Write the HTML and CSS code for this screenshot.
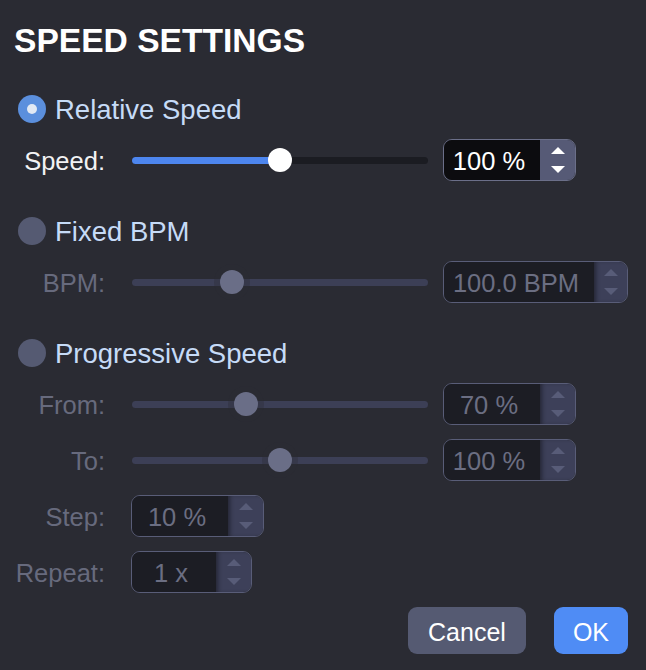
FILE: index.html
```html
<!DOCTYPE html>
<html>
<head>
<meta charset="utf-8">
<link rel="stylesheet" href="styles.css">
</head>
<body>
<div class="dialog">
  <h1 class="title">SPEED SETTINGS</h1>

  <div class="option">
    <span class="radio checked"></span>
    <span class="option-label">Relative Speed</span>
  </div>
  <div class="row">
    <span class="label">Speed:</span>
    <div class="slider" style="--v:50%">
      <div class="track"><div class="fill"></div></div>
      <div class="thumb"></div>
    </div>
    <div class="spin w133">
      <div class="field">100 %</div>
      <div class="arrows"><span class="up"></span><span class="down"></span></div>
    </div>
  </div>

  <div class="option gap-top">
    <span class="radio"></span>
    <span class="option-label">Fixed BPM</span>
  </div>
  <div class="row disabled">
    <span class="label">BPM:</span>
    <div class="slider" style="--v:33.8%">
      <div class="track"></div>
      <div class="thumb"></div>
    </div>
    <div class="spin w185">
      <div class="field">100.0 BPM</div>
      <div class="arrows"><span class="up"></span><span class="down"></span></div>
    </div>
  </div>

  <div class="option gap-top">
    <span class="radio"></span>
    <span class="option-label">Progressive Speed</span>
  </div>
  <div class="row disabled">
    <span class="label">From:</span>
    <div class="slider" style="--v:38.5%">
      <div class="track"></div>
      <div class="thumb"></div>
    </div>
    <div class="spin w133">
      <div class="field">70 %</div>
      <div class="arrows"><span class="up"></span><span class="down"></span></div>
    </div>
  </div>
  <div class="row disabled sp14">
    <span class="label">To:</span>
    <div class="slider" style="--v:50%">
      <div class="track"></div>
      <div class="thumb"></div>
    </div>
    <div class="spin w133">
      <div class="field">100 %</div>
      <div class="arrows"><span class="up"></span><span class="down"></span></div>
    </div>
  </div>
  <div class="row disabled sp14">
    <span class="label">Step:</span>
    <div class="spin w133">
      <div class="field">10 %</div>
      <div class="arrows"><span class="up"></span><span class="down"></span></div>
    </div>
  </div>
  <div class="row disabled sp14">
    <span class="label">Repeat:</span>
    <div class="spin w121">
      <div class="field">1 x</div>
      <div class="arrows"><span class="up"></span><span class="down"></span></div>
    </div>
  </div>

  <div class="buttons">
    <button class="btn cancel">Cancel</button>
    <button class="btn ok">OK</button>
  </div>
</div>
</body>
</html>
```

FILE: styles.css
```css
html, body {
  margin: 0;
  padding: 0;
  background: #2a2b33;
}
body {
  width: 646px;
  height: 670px;
  overflow: hidden;
  font-family: "Liberation Sans", Arial, Helvetica, sans-serif;
}
.dialog {
  padding: 14px 18px 0 14px;
}
.title {
  margin: 0;
  height: 53px;
  line-height: 54px;
  font-size: 33.6px;
  font-weight: bold;
  color: #ffffff;
  letter-spacing: 0;
}
.option {
  display: flex;
  align-items: center;
  height: 42px;
  margin-top: 21px;
  padding-left: 4px;
}
.option.gap-top {
  margin-top: 29px;
}
.radio {
  width: 28px;
  height: 28px;
  border-radius: 50%;
  background: #555a72;
  display: flex;
  align-items: center;
  justify-content: center;
  flex: none;
}
.radio.checked {
  background: #5b8fdd;
}
.radio.checked::after {
  content: "";
  width: 10px;
  height: 10px;
  border-radius: 50%;
  background: #e2e9f4;
}
.option-label {
  margin-left: 9px;
  padding-top: 2px;
  font-size: 27.5px;
  color: #c6dbf7;
}
.row {
  display: flex;
  align-items: center;
  height: 42px;
  margin-top: 9px;
}
.row.sp14 {
  margin-top: 14px;
}
.label {
  width: 91px;
  text-align: right;
  margin-right: 26px;
  padding-top: 3px;
  font-size: 25.5px;
  color: #f2f2f4;
  flex: none;
}
.disabled .label {
  color: #676a7d;
}
.slider {
  position: relative;
  width: 298px;
  height: 42px;
  margin-right: 14px;
  display: flex;
  align-items: center;
  flex: none;
}
.track {
  width: 296px;
  margin-left: 1px;
  height: 7px;
  border-radius: 4px;
  background: #1b1c22;
  overflow: hidden;
}
.fill {
  width: 50%;
  height: 100%;
  background: #4d86ef;
}
.thumb {
  position: absolute;
  top: 9px;
  left: calc(1px + var(--v) * 2.96 / 2.98 - 12px);
  width: 24px;
  height: 24px;
  border-radius: 50%;
  background: #ffffff;
}
.disabled .track {
  background: #3c3f56;
}
.disabled .thumb {
  background: #6a6e87;
  box-shadow: 0 0 0 6px rgba(42, 43, 51, 0.35);
}
.spin {
  box-sizing: border-box;
  height: 42px;
  border: 1.5px solid #6b6f89;
  border-radius: 9px;
  overflow: hidden;
  display: flex;
  flex: none;
}
.w133 { width: 133px; }
.w185 { width: 185px; }
.w121 { width: 121px; }
.field {
  flex: 1;
  background: #0c0c0f;
  color: #ffffff;
  font-size: 25.5px;
  display: flex;
  align-items: center;
  justify-content: center;
  padding-top: 3px;
  padding-right: 6px;
}
.arrows {
  width: 35px;
  flex: none;
  background: #565a76;
  display: flex;
  flex-direction: column;
  align-items: center;
  justify-content: center;
  gap: 12px;
}
.w185 .arrows { width: 33px; }
.up, .down {
  width: 0;
  height: 0;
  border-left: 7px solid transparent;
  border-right: 7px solid transparent;
}
.up {
  border-bottom: 7px solid #ffffff;
}
.down {
  border-top: 7px solid #ffffff;
}
.disabled .spin {
  border-color: #595d78;
}
.disabled .field {
  background: #1c1d24;
  color: #6b6e82;
}
.disabled .arrows {
  background: #3d4059;
  box-shadow: inset 4px 0 4px -2px rgba(20, 20, 28, 0.6);
}
.disabled .up {
  border-bottom-color: #585c78;
}
.disabled .down {
  border-top-color: #585c78;
}
.buttons {
  display: flex;
  justify-content: flex-end;
  gap: 28px;
  margin-top: 14px;
}
.btn {
  height: 47px;
  padding: 3px 20px 0;
  border: none;
  border-radius: 9px;
  font-family: "Liberation Sans", Arial, Helvetica, sans-serif;
  font-size: 25px;
  color: #ffffff;
}
.cancel {
  background: #555a72;
}
.ok {
  background: #4f8cf5;
  padding: 3px 19px 0;
}
```
